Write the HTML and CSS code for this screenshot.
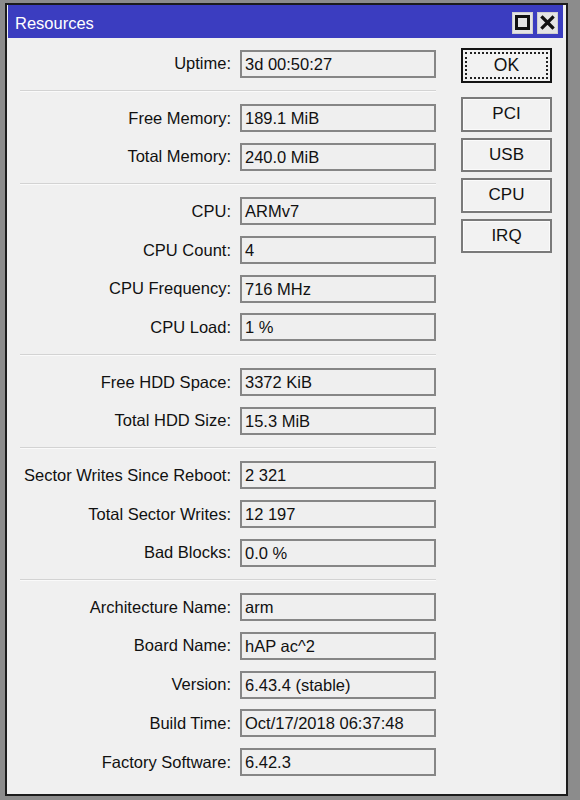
FILE: index.html
```html
<!DOCTYPE html>
<html>
<head>
<meta charset="utf-8">
<link rel="stylesheet" href="styles.css">
</head>
<body>
<div class="window">
  <div class="titlebar">
    <span class="title">Resources</span>
    <div class="tb-buttons">
      <div class="tb-btn">
        <svg width="15" height="15" viewBox="0 0 15 15"><rect x="1.5" y="1.5" width="12" height="12" fill="none" stroke="#111" stroke-width="3"/></svg>
      </div>
      <div class="tb-btn">
        <svg width="15" height="15" viewBox="0 0 15 15"><path d="M2.5 2.5 L12.5 12.5 M12.5 2.5 L2.5 12.5" stroke="#111" stroke-width="3.2" stroke-linecap="square"/></svg>
      </div>
    </div>
  </div>
  <div class="content">
    <div class="fields">
      <div class="group">
        <div class="row"><span class="label">Uptime:</span><span class="value">3d 00:50:27</span></div>
      </div>
      <div class="sep"></div>
      <div class="group">
        <div class="row"><span class="label">Free Memory:</span><span class="value">189.1 MiB</span></div>
        <div class="row"><span class="label">Total Memory:</span><span class="value">240.0 MiB</span></div>
      </div>
      <div class="sep"></div>
      <div class="group">
        <div class="row"><span class="label">CPU:</span><span class="value">ARMv7</span></div>
        <div class="row"><span class="label">CPU Count:</span><span class="value">4</span></div>
        <div class="row"><span class="label">CPU Frequency:</span><span class="value">716 MHz</span></div>
        <div class="row"><span class="label">CPU Load:</span><span class="value">1 %</span></div>
      </div>
      <div class="sep"></div>
      <div class="group">
        <div class="row"><span class="label">Free HDD Space:</span><span class="value">3372 KiB</span></div>
        <div class="row"><span class="label">Total HDD Size:</span><span class="value">15.3 MiB</span></div>
      </div>
      <div class="sep"></div>
      <div class="group">
        <div class="row"><span class="label">Sector Writes Since Reboot:</span><span class="value">2 321</span></div>
        <div class="row"><span class="label">Total Sector Writes:</span><span class="value">12 197</span></div>
        <div class="row"><span class="label">Bad Blocks:</span><span class="value">0.0 %</span></div>
      </div>
      <div class="sep"></div>
      <div class="group">
        <div class="row"><span class="label">Architecture Name:</span><span class="value">arm</span></div>
        <div class="row"><span class="label">Board Name:</span><span class="value">hAP ac^2</span></div>
        <div class="row"><span class="label">Version:</span><span class="value">6.43.4 (stable)</span></div>
        <div class="row"><span class="label">Build Time:</span><span class="value">Oct/17/2018 06:37:48</span></div>
        <div class="row"><span class="label">Factory Software:</span><span class="value">6.42.3</span></div>
      </div>
    </div>
    <div class="buttons">
      <div class="btn btn-ok"><span class="focus">OK</span></div>
      <div class="btn">PCI</div>
      <div class="btn">USB</div>
      <div class="btn">CPU</div>
      <div class="btn">IRQ</div>
    </div>
  </div>
</div>
</body>
</html>
```

FILE: styles.css
```css
html, body {
  margin: 0;
  padding: 0;
}
body {
  background: #8c8c8c;
  font-family: "Liberation Sans", Arial, sans-serif;
  font-size: 16.5px;
  color: #111111;
  width: 580px;
  height: 800px;
  overflow: hidden;
}
.window {
  margin: 3px 0 0 5px;
  width: 563px;
  height: 793px;
  box-sizing: border-box;
  border: 2px solid #1c1c1c;
  background: #f0f0f0;
  padding: 0 3px 0 1px;
}
.titlebar {
  height: 33px;
  background: #3b3dc0;
  display: flex;
  align-items: center;
  justify-content: space-between;
  padding: 0 5px 0 7px;
}
.title {
  color: #ffffff;
  font-size: 16.5px;
  padding-top: 3px;
}
.tb-buttons {
  display: flex;
  gap: 4px;
  padding-top: 2px;
}
.tb-btn {
  width: 21px;
  height: 22px;
  box-sizing: border-box;
  background: #e4e4e4;
  border: 1px solid #cfcfcf;
  display: flex;
  align-items: center;
  justify-content: center;
}
.content {
  display: flex;
  align-items: flex-start;
  padding: 11.5px 0 0 12px;
}
.fields {
  width: 416px;
  display: flex;
  flex-direction: column;
}
.group {
  display: flex;
  flex-direction: column;
  gap: 10.7px;
}
.row {
  display: grid;
  grid-template-columns: 211px 196px;
  column-gap: 9px;
  align-items: center;
}
.label {
  text-align: right;
  white-space: nowrap;
}
.value {
  height: 28px;
  box-sizing: border-box;
  border: 2px solid #868686;
  background: #efefef;
  padding: 0 3px;
  line-height: 24px;
  white-space: nowrap;
}
.sep {
  height: 2px;
  margin: 12.3px 0;
  background: #d3d3d3;
  border-bottom: 1px solid #fafafa;
  box-sizing: border-box;
}
.buttons {
  margin-left: 25px;
  margin-top: -1.5px;
  width: 91px;
  display: flex;
  flex-direction: column;
  gap: 6px;
}
.btn {
  height: 34.5px;
  box-sizing: border-box;
  border: 2px solid #7a7a7a;
  background: #f2f2f2;
  box-shadow: inset 0 0 0 1px #fbfbfb;
  display: flex;
  align-items: center;
  justify-content: center;
  font-size: 17px;
}
.btn-ok {
  height: 35px;
  margin-bottom: 8px;
  border: 2px solid #141414;
  padding: 2px;
  box-shadow: none;
  align-items: stretch;
  justify-content: stretch;
}
.focus {
  flex: 1;
  border: 2px dotted #222;
  display: flex;
  align-items: center;
  justify-content: center;
  font-size: 17.5px;
}
```
